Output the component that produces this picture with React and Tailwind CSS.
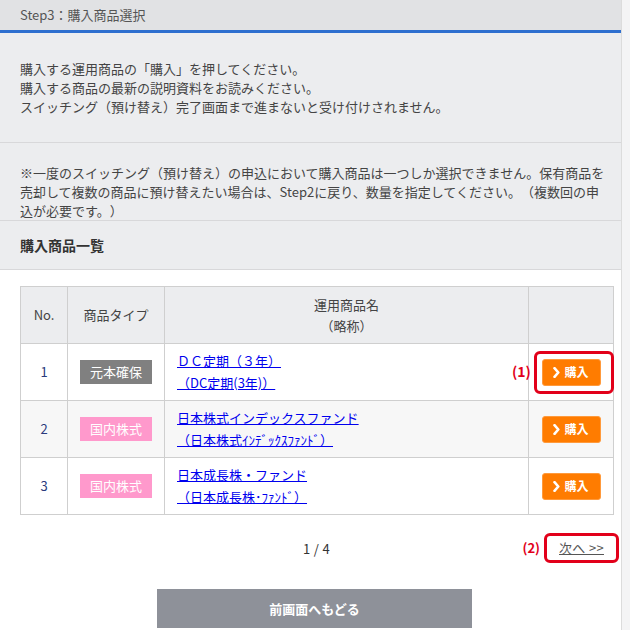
import React from "react";

const rows = [
    {
        no: 1,
        type: "元本確保",
        typeClass: "bg-[#808080]",
        name: "ＤＣ定期（３年）",
        short: "（DC定期(3年)）",
        marked: true,
    },
    {
        no: 2,
        type: "国内株式",
        typeClass: "bg-[#ff99cc]",
        name: "日本株式インデックスファンド",
        short: "（日本株式ｲﾝﾃﾞｯｸｽﾌｧﾝﾄﾞ）",
        striped: true,
    },
    {
        no: 3,
        type: "国内株式",
        typeClass: "bg-[#ff99cc]",
        name: "日本成長株・ファンド",
        short: "（日本成長株･ﾌｧﾝﾄﾞ）",
    },
];

function BuyButton() {
    return (
        <button className="w-[59px] h-[27px] flex items-center justify-center gap-[4px] bg-[#ff7c00] border border-[#ff9a3c] rounded-[3px] text-white text-[12px] font-bold">
            <svg width="7" height="11" viewBox="0 0 7 11" fill="none">
                <path d="M1.5 1.2 L5.3 5.5 L1.5 9.8" stroke="white" strokeWidth="2.6" strokeLinejoin="round" strokeLinecap="round" />
            </svg>
            <span>購入</span>
        </button>
    );
}

export default function App() {
    return (
        <div
            className="min-h-screen bg-[#f4f4f5] text-[#444] text-[13px] [text-spacing-trim:space-all]"
            style={{ fontFamily: '"Noto Sans CJK JP", "Noto Sans", sans-serif' }}
        >
            <div className="w-[622px] bg-white border-r border-[#dcdcdc]">
                {/* Step header */}
                <div className="h-[30px] bg-[#e1e2e4] px-5 flex items-center text-[#555]">
                    Step3：購入商品選択
                </div>
                <div className="h-[3px] bg-[#2e6fcf]"></div>

                {/* Guidance */}
                <div className="bg-[#ecedef] px-5 pt-[26px] pb-[26px] leading-[19px] border-b border-[#d8d8da]">
                    <p>購入する運用商品の「購入」を押してください。</p>
                    <p>購入する商品の最新の説明資料をお読みください。</p>
                    <p>スイッチング（預け替え）完了画面まで進まないと受け付けされません。</p>
                </div>
                <div className="bg-[#ecedef] pl-5 pt-[20px] leading-[19px] border-b border-[#d8d8da] whitespace-nowrap">
                    <p>※一度のスイッチング（預け替え）の申込において購入商品は一つしか選択できません。保有商品を</p>
                    <p>売却して複数の商品に預け替えたい場合は、Step2に戻り、数量を指定してください。（複数回の申</p>
                    <p>込が必要です。）</p>
                </div>

                {/* List title */}
                <div className="h-[49px] bg-[#ecedef] px-5 flex items-center border-b border-[#d8d8da] text-[14px] font-bold text-[#333]">
                    購入商品一覧
                </div>

                {/* Table */}
                <div className="pt-4 pl-5">
                    <table className="w-[593px] border-collapse table-fixed">
                        <colgroup>
                            <col className="w-[47px]" />
                            <col className="w-[97px]" />
                            <col className="w-[364px]" />
                            <col className="w-[85px]" />
                        </colgroup>
                        <thead>
                            <tr className="h-[57px] bg-[#ecedef]">
                                <th className="border border-[#cfcfcf] font-normal">No.</th>
                                <th className="border border-[#cfcfcf] font-normal">商品タイプ</th>
                                <th className="border border-[#cfcfcf] font-normal leading-[21px]">
                                    運用商品名
                                    <br />
                                    （略称）
                                </th>
                                <th className="border border-[#cfcfcf]"></th>
                            </tr>
                        </thead>
                        <tbody>
                            {rows.map((r) => (
                                <tr
                                    key={r.no}
                                    className={`h-[57px] ${r.striped ? "bg-[#f7f7f7]" : "bg-white"}`}
                                >
                                    <td className="border border-[#cfcfcf] text-center text-[#2a3a7c]">{r.no}</td>
                                    <td className="border border-[#cfcfcf]">
                                        <div className="flex justify-center">
                                            <span
                                                className={`w-[72px] h-[24px] flex items-center justify-center text-white ${r.typeClass}`}
                                            >
                                                {r.type}
                                            </span>
                                        </div>
                                    </td>
                                    <td className="border border-[#cfcfcf] pl-[12px] leading-[22px]">
                                        <a href="#" className="text-[#0000ee] underline block w-fit">
                                            {r.name}
                                        </a>
                                        <a href="#" className="text-[#0000ee] underline block w-fit">
                                            {r.short}
                                        </a>
                                    </td>
                                    <td className="border border-[#cfcfcf]">
                                        <div className="relative flex justify-center">
                                            <BuyButton />
                                            {r.marked && (
                                                <>
                                                    <div className="absolute left-[5px] top-[-8px] w-[80px] h-[43px] border-[3px] border-[#e2001a] rounded-[6px]"></div>
                                                    <span className="absolute left-[-17px] top-[2px] text-[#e2001a] font-bold text-[14px]">
                                                        (1)
                                                    </span>
                                                </>
                                            )}
                                        </div>
                                    </td>
                                </tr>
                            ))}
                        </tbody>
                    </table>

                    {/* Pagination */}
                    <div className="w-[593px] h-[68px] flex items-center justify-center relative">
                        <span className="text-[#333] tracking-wide">1 / 4</span>
                        <div className="absolute right-[-6px] top-[18px] flex items-center">
                            <span className="text-[#e2001a] font-bold text-[13px] mr-[4px]">(2)</span>
                            <div className="w-[75px] h-[30px] border-[3px] border-[#e2001a] rounded-[6px] flex items-center justify-center">
                                <a href="#" className="text-[#555] underline tracking-wide">次へ &gt;&gt;</a>
                            </div>
                        </div>
                    </div>
                </div>

                {/* Back */}
                <div className="pt-[6px] pb-4 flex pl-[157px]">
                    <button className="w-[315px] h-[39px] bg-[#8e9199] text-white font-bold text-[13px]">
                        前画面へもどる
                    </button>
                </div>
            </div>
        </div>
    );
}
